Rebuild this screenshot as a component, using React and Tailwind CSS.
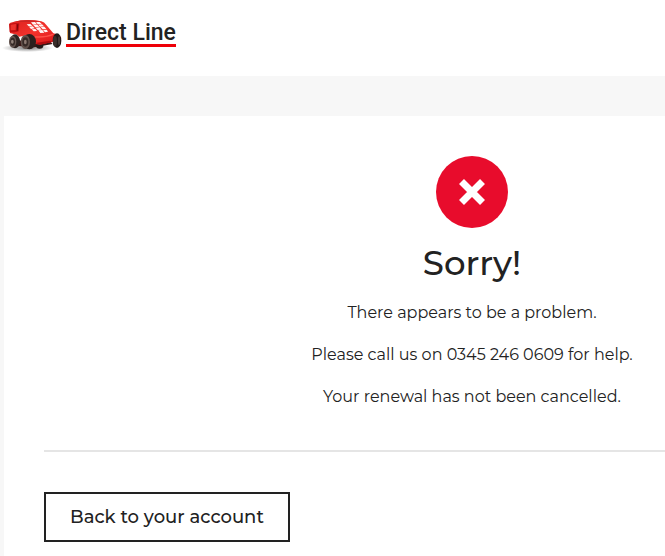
// src/App.jsx
const messages = [
  'There appears to be a problem.',
  'Please call us on 0345 246 0609 for help.',
  'Your renewal has not been cancelled.',
];

const CarLogo = () => (
  <svg viewBox="0 9 198 150" className="h-[50px] w-[66px] shrink-0" aria-hidden="true">
    <defs>
      <linearGradient id="body" x1="0" y1="0" x2="1" y2="1">
        <stop offset="0" stopColor="#dc2320" />
        <stop offset="0.5" stopColor="#f4322c" />
        <stop offset="1" stopColor="#d51216" />
      </linearGradient>
      <radialGradient id="shadow">
        <stop offset="0" stopColor="#444" stopOpacity="0.7" />
        <stop offset="1" stopColor="#444" stopOpacity="0" />
      </radialGradient>
    </defs>

    {/* Ground shadow */}
    <ellipse cx="82" cy="114" rx="76" ry="12" fill="url(#shadow)" />

    {/* Far wheels and chassis */}
    <path d="M44 90 L70 92 L112 98 L150 94 L158 102 L104 112 L50 108 Z" fill="#3a1716" />
    <ellipse cx="119" cy="107" rx="11" ry="9" fill="#241918" />

    {/* Body */}
    <path
      d="M27 42 Q29 37 40 36 L62 31 Q96 28 124 34 Q133 36 139 45 L160 70 Q178 73 184 84 L178 94 L156 96 L120 104 L102 101 L98 84 L80 76 L58 80 L50 74 L30 69 Z"
      fill="url(#body)"
    />
    <path d="M28 43 Q42 37 58 40 L56 64 Q44 69 29 66 Z" fill="#c21114" />
    <path d="M32 44 L48 42 L47 60 L32 61 Z" fill="#ec322c" />
    <path d="M51 43 L55 43 L53 62 L50 63 Z" fill="#7d080b" />
    <path d="M40 36 Q72 27 122 34 L92 36 Z" fill="#cb2523" />
    <path d="M96 80 Q134 84 160 73" fill="none" stroke="#ff5148" strokeWidth="4" />
    <path d="M106 99 L150 92 L156 96 L120 104 Z" fill="#b00c10" />

    {/* Telephone keypad on the bonnet */}
    <g fill="#fff6f5">
      <path d="M80 43 L91 42 L97 48 L86 49 Z" />
      <path d="M87 50 L98 49 L104 55 L93 57 Z" />
      <path d="M95 58 L106 57 L111 63 L101 64 Z" />
      <path d="M93 37 L105 36 L111 43 L99 44 Z" />
      <path d="M100 45 L112 44 L118 50 L106 52 Z" />
      <path d="M107 53 L119 52 L125 59 L113 60 Z" />
      <path d="M115 61 L127 60 L133 68 L121 69 Z" />
      <path d="M108 36 L119 36 L125 42 L113 43 Z" />
      <path d="M115 44 L126 43 L132 49 L120 50 Z" />
      <path d="M122 51 L133 50 L139 57 L128 58 Z" />
      <path d="M129 60 L140 59 L144 65 L135 67 Z" />
    </g>

    {/* Near wheels */}
    <ellipse cx="45" cy="94" rx="15" ry="21" fill="#2d2321" />
    <ellipse cx="38" cy="95" rx="11" ry="18" fill="#62534e" />
    <ellipse cx="38" cy="95" rx="7" ry="12" fill="#352a27" />
    <ellipse cx="37" cy="95" rx="4" ry="6" fill="#94857d" />
    <ellipse cx="88" cy="95" rx="20" ry="23" fill="#2b201e" />
    <ellipse cx="76" cy="96" rx="14" ry="21" fill="#61504a" />
    <ellipse cx="76" cy="96" rx="9" ry="14" fill="#372a27" />
    <ellipse cx="76" cy="96" rx="4" ry="7" fill="#8b7870" />
    <ellipse cx="171" cy="92" rx="13" ry="22" fill="#211918" />
    <ellipse cx="165" cy="94" rx="6" ry="16" fill="#3a2e2b" />
    <ellipse cx="177" cy="92" rx="3" ry="13" fill="#4a3d39" />
  </svg>
);

const ErrorIcon = () => (
  <div className="flex h-18 w-18 items-center justify-center rounded-full bg-[#e80c2c]">
    <svg viewBox="0 0 26 26" className="h-[26px] w-[26px]" aria-hidden="true">
      <path d="M2.5 2.5 L23.5 23.5 M23.5 2.5 L2.5 23.5" stroke="#fff" strokeWidth="7" />
    </svg>
  </div>
);

const App = () => {
  return (
    <div className="min-h-screen overflow-x-hidden bg-[#f7f7f7] font-['Montserrat','Inter',sans-serif] text-[#222]">
      <header className="flex h-19 items-center bg-white">
        <a href="#home" className="flex items-center" aria-label="Direct Line home">
          <CarLogo />
          <span className="mb-2 border-b-3 border-[#ee0008] font-['Roboto',sans-serif] text-[23px] leading-[22px] font-medium">
            Direct Line
          </span>
        </a>
      </header>

      <main className="mt-10 -mr-[275px] ml-1 min-h-[calc(100vh-116px)] bg-white p-10">
        <section className="flex flex-col items-center text-center">
          <ErrorIcon />
          <h1 className="mt-[11px] text-[34px] leading-12 font-medium">Sorry!</h1>
          <div className="mt-[14px] flex flex-col gap-[18px]">
            {messages.map((message) => (
              <p key={message} className="text-base leading-6">
                {message}
              </p>
            ))}
          </div>
        </section>

        <hr className="mt-[41px] border-t-2 border-[#e5e5e5]" />

        <button
          type="button"
          className="mt-10 h-[50px] border-2 border-[#222] px-6 text-lg font-medium"
        >
          Back to your account
        </button>
      </main>
    </div>
  );
};

export default App;
